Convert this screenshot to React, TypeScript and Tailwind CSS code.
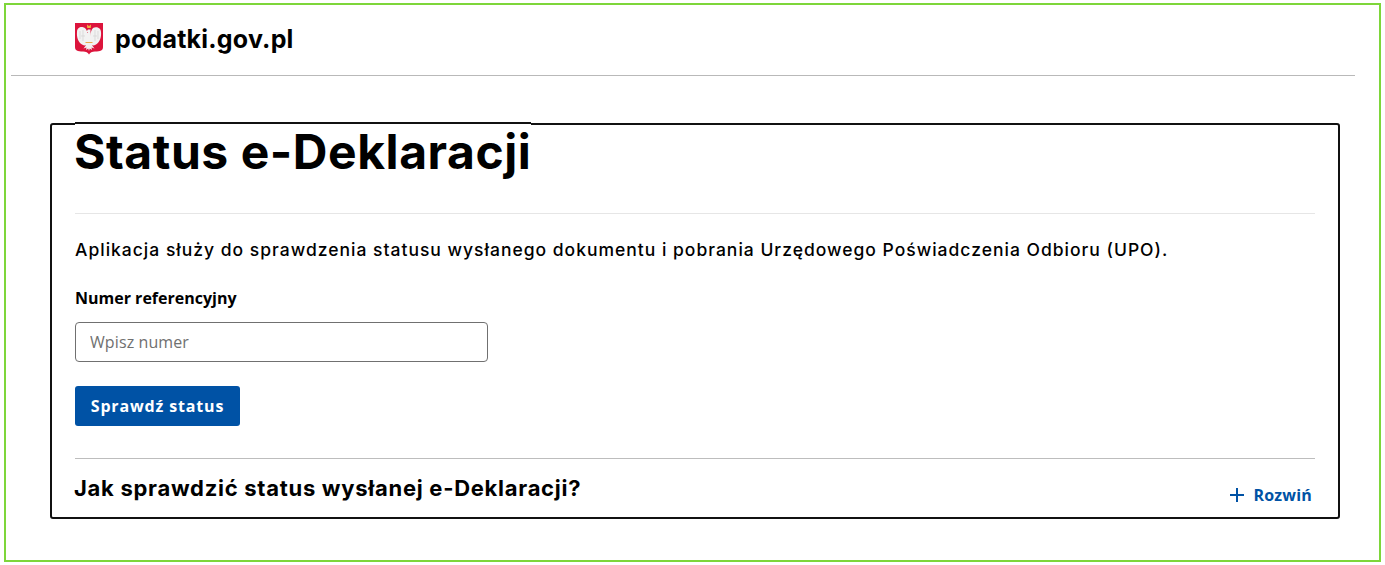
const Eagle = () => (
  <svg width="28" height="32" viewBox="0 0 28 32">
    <path d="M0 0H28V24C28 27.500 25.500 28.500 20 28.500C17 28.500 15 29.500 14 31.500C13 29.500 11 28.500 8 28.500C2.500 28.500 0 27.500 0 24Z" fill="#dc143c" />
    <path d="M2 9C2 5 5 3.500 7.500 4C10.500 4.500 12 7 12.200 10L13 9.500L11.500 8.500L13 6.500H15.500L15.500 13C15.500 10 16 7 18 5C20.500 3.300 26 4 26 9C26.500 14 25 19 21 21.500C19.500 22.500 18 22.500 17 22.300L19.500 25.500L16.500 24.500L17 27L14.800 25.500L14 28L13.200 25.500L11 27L11.500 24.500L8.500 25.500L11 22.300C10 22.500 8.500 22.500 7 21.500C3 19 1.500 14 2 9Z" fill="#f2f2f2" />
    <path d="M12 1.500L14 3L16 1.500L15.800 5H12.200Z" fill="#f4b03e" />
    <path d="M5 8V16M8 7V18M20 7V18M23 8V16M6 13H10M18 13H22" stroke="#d2d2d2" strokeWidth="0.7" />
    <path d="M10.500 19.500H17.500" stroke="#e8a13a" strokeWidth="0.9" />
  </svg>
)

const App = () => {
  return (
    <div className="h-[565px] w-[1385px] overflow-hidden bg-white pt-[3px] pl-[4px] font-['Inter',sans-serif] text-black">
      <div className="h-[559px] w-[1377px] border-2 border-[#7ed63a] pl-[5px]">
        <header className="h-[71px] w-[1344px] border-b border-[#b9b9b9]">
          <div className="flex items-center pt-[18px] pl-[64px]">
            <Eagle />
            <span className="ml-[12px] text-[25px] leading-[32px] font-bold tracking-[0.2px]">podatki.gov.pl</span>
          </div>
        </header>

        <main className="mt-[47px] ml-[39px] h-[396px] w-[1290px] rounded-[3px] border-2 border-[#111] pr-[23px] pl-[23px]">
          <h1 className="-mt-[3px] h-[53px] w-[456px] border-t-2 border-[#111] bg-white -indent-[1px] text-[48px] leading-[56px] font-bold tracking-[0.55px] whitespace-nowrap">
            Status e-Deklaracji
          </h1>
          <div className="mt-[38px] border-t border-[#e6e6e6] pt-[24px]">
            <p className="text-[17.5px] leading-[24px] font-medium tracking-[1px] whitespace-nowrap">
              Aplikacja służy do sprawdzenia statusu wysłanego dokumentu i pobrania Urzędowego Poświadczenia Odbioru (UPO).
            </p>
            <label className="mt-[24px] block font-['Open_Sans',sans-serif] text-[16px] leading-[24px] font-bold">
              Numer referencyjny
            </label>
            <input
              placeholder="Wpisz numer"
              className="mt-[12px] block h-[40px] w-[413px] rounded-[4px] border border-[#707070] px-[14px] font-['Open_Sans',sans-serif] text-[16px] tracking-[0.1px] outline-none placeholder:text-[#707070]"
            />
            <button className="mt-[24px] block h-[40px] w-[165px] rounded-[3px] bg-[#0052a5] font-['Open_Sans',sans-serif] text-[16px] font-bold tracking-[0.85px] text-white">
              Sprawdź status
            </button>
          </div>
          <div className="mt-[32px] flex justify-between border-t border-[#bdbdbd]">
            <h2 className="mt-[14px] -ml-[1px] text-[22px] leading-[30px] font-bold tracking-[0.72px] whitespace-nowrap">
              Jak sprawdzić status wysłanej e-Deklaracji?
            </h2>
            <button className="mt-[24px] mr-[3px] flex h-[24px] items-center gap-[8px] font-['Open_Sans',sans-serif] text-[16px] font-bold tracking-[0.2px] text-[#0052a5]">
              <svg width="16" height="16" viewBox="0 0 16 16" fill="none" stroke="#0052a5" strokeWidth="2">
                <path d="M8 1V15M1 8H15" />
              </svg>
              Rozwiń
            </button>
          </div>
        </main>
      </div>
    </div>
  )
}

export default App
